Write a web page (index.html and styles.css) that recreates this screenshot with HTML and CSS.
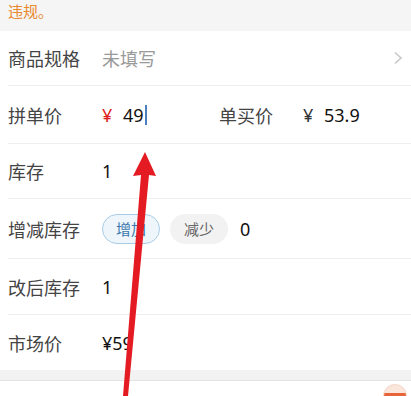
FILE: index.html
```html
<!DOCTYPE html>
<html lang="zh-CN">
<head>
    <meta charset="UTF-8">
    <meta name="viewport" content="width=device-width, initial-scale=1.0">
    <title>编辑商品</title>
    <link rel="stylesheet" href="styles.css">
</head>
<body>
    <div class="page">
        <div class="notice">违规。</div>

        <div class="form">
            <div class="row row-spec">
                <span class="label">商品规格</span>
                <span class="value muted">未填写</span>
                <span class="chevron">
                    <svg width="10" height="14" viewBox="0 0 10 14"><path d="M2 1.5 L8 7 L2 12.5" fill="none" stroke="#c8c8c8" stroke-width="1.6"/></svg>
                </span>
            </div>
            <div class="row row-tall">
                <span class="label">拼单价</span>
                <span class="value price">
                    <span class="yen red">¥</span>
                    <span class="num">49</span><span class="cursor"></span>
                </span>
                <span class="label label-mid">单买价</span>
                <span class="value price">
                    <span class="yen">¥</span>
                    <span class="num">53.9</span>
                </span>
            </div>
            <div class="row">
                <span class="label">库存</span>
                <span class="value num">1</span>
            </div>
            <div class="row row-taller">
                <span class="label">增减库存</span>
                <span class="value stock">
                    <span class="pill pill-on">增加</span>
                    <span class="pill">减少</span>
                    <span class="num">0</span>
                </span>
            </div>
            <div class="row row-mid">
                <span class="label">改后库存</span>
                <span class="value num">1</span>
            </div>
            <div class="row row-last">
                <span class="label">市场价</span>
                <span class="value num">¥59</span>
            </div>
        </div>

        <div class="gap"></div>
        <div class="bottom">
            <span class="app-icon"></span>
        </div>

        <!-- 标注箭头 -->
        <svg class="arrow" width="411" height="396" viewBox="0 0 411 396">
            <polygon points="145,152 156,176 149,175 128,396 123,396 141,175 133,176" fill="#e41b23"/>
        </svg>
    </div>
</body>
</html>
```

FILE: styles.css
```css
body {
    margin: 0;
    font-family: "Noto Sans", "Noto Sans CJK SC", sans-serif;
    background: #fff;
}
.page {
    position: relative;
    width: 411px;
    height: 396px;
    overflow: hidden;
}
.notice {
    height: 31px;
    background: #f5f5f5;
    color: #e8892e;
    font-size: 15px;
    line-height: 22px;
    padding-left: 8px;
    box-sizing: border-box;
}
.form {
    padding-left: 8px;
}
.row {
    display: flex;
    align-items: center;
    height: 55px;
    border-bottom: 1px solid #eeeeee;
    box-sizing: border-box;
    font-size: 18px;
    color: #333;
}
.row-tall {
    height: 58px;
}
.row-taller {
    height: 60px;
}
.row-mid {
    height: 56px;
}
.row-last {
    border-bottom: none;
}
.label {
    width: 94px;
    flex-shrink: 0;
    color: #444;
}
.label-mid {
    width: 84px;
}
.value {
    display: flex;
    align-items: center;
}
.muted {
    color: #999;
    flex: 1;
}
.chevron {
    width: 18px;
    display: flex;
    align-items: center;
}
.price {
    width: 117px;
    flex-shrink: 0;
}
.yen {
    width: 21px;
    color: #333;
}
.red {
    color: #e02020;
}
.num {
    color: #111;
}
.cursor {
    width: 2px;
    height: 20px;
    background: #4a7fc2;
    margin-left: 1px;
}
.stock {
    gap: 10px;
}
.pill {
    width: 58px;
    height: 30px;
    border-radius: 15px;
    background: #f2f2f2;
    color: #666;
    font-size: 15px;
    display: flex;
    align-items: center;
    justify-content: center;
    box-sizing: border-box;
}
.pill-on {
    background: #eef6fc;
    border: 1px solid #a9cce6;
    color: #3a78ad;
}
.stock .num {
    margin-left: 2px;
}
.gap {
    height: 10px;
    background: #f2f2f2;
    border-bottom: 1px solid #e4e4e4;
}
.bottom {
    display: flex;
    justify-content: flex-end;
    padding: 3px 4px 0 0;
}
.app-icon {
    width: 22px;
    height: 22px;
    border-radius: 50%;
    background: linear-gradient(#fbe6dc 0, #fbe6dc 35%, #e8643a 36%, #e8643a 100%);
    border: 1px solid #f4d3c6;
}
.arrow {
    position: absolute;
    left: 0;
    top: 0;
    pointer-events: none;
}
```
